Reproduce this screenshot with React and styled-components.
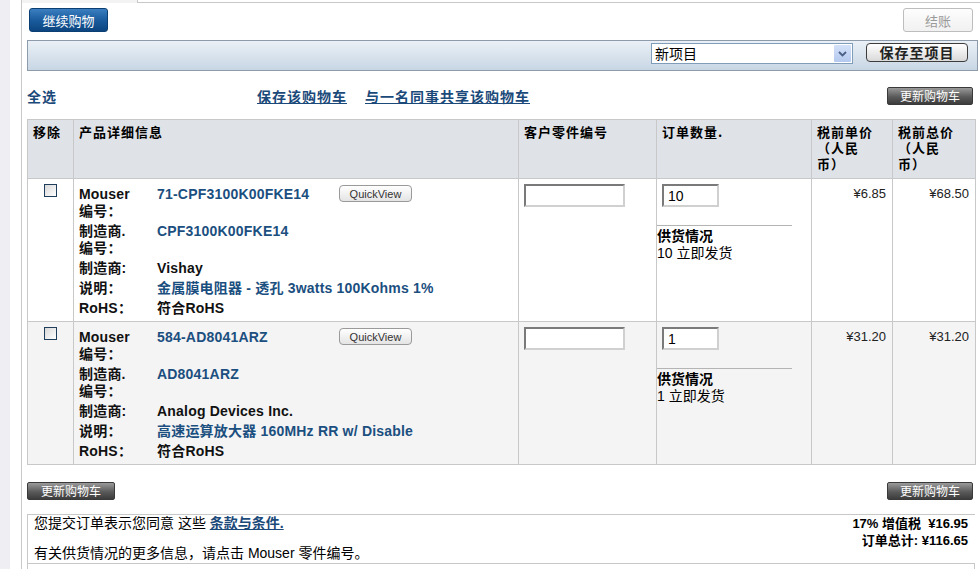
import React from 'react'
import styled, { createGlobalStyle } from 'styled-components'

const GlobalStyle = createGlobalStyle`
  body {
    margin: 0;
    background: #fff;
    color: #000;
    font-family: "Liberation Sans", "Noto Sans CJK SC", sans-serif;
    font-size: 13px;
  }
`

const items = [
    {
        mouser: '71-CPF3100K00FKE14',
        mfrPart: 'CPF3100K00FKE14',
        maker: 'Vishay',
        desc: '金属膜电阻器 - 透孔 3watts 100Kohms 1%',
        qty: '10',
        unit: '¥6.85',
        total: '¥68.50',
    },
    {
        mouser: '584-AD8041ARZ',
        mfrPart: 'AD8041ARZ',
        maker: 'Analog Devices Inc.',
        desc: '高速运算放大器 160MHz RR w/ Disable',
        qty: '1',
        unit: '¥31.20',
        total: '¥31.20',
    },
]

function App() {
    return (
        <Page>
            <GlobalStyle />
            <Side />
            <Gutter />
            <Main>
                <TopTabs>
                    <Tab />
                    <TabRest />
                </TopTabs>
                <Content>
                    <ActionRow>
                        <BlueButton>继续购物</BlueButton>
                        <CheckoutButton>结账</CheckoutButton>
                    </ActionRow>

                    <ProjectBar>
                        <ProjectSelect>
                            <span>新项目</span>
                            <SelectArrow>
                                <svg width="9" height="6" viewBox="0 0 9 6">
                                    <path d="M1 1 L4.5 4.5 L8 1" fill="none" stroke="#4a5f86" strokeWidth="1.8" />
                                </svg>
                            </SelectArrow>
                        </ProjectSelect>
                        <SaveButton>保存至项目</SaveButton>
                    </ProjectBar>

                    <LinksRow>
                        <SelectAll>全选</SelectAll>
                        <Links>
                            <CartLink>保存该购物车</CartLink>
                            <CartLink>与一名同事共享该购物车</CartLink>
                        </Links>
                        <GrayButton>更新购物车</GrayButton>
                    </LinksRow>

                    <Cart>
                        <colgroup>
                            <col style={{ width: 46 }} />
                            <col style={{ width: 445 }} />
                            <col style={{ width: 138 }} />
                            <col style={{ width: 155 }} />
                            <col style={{ width: 81 }} />
                            <col style={{ width: 83 }} />
                        </colgroup>
                        <thead>
                            <HeadRow>
                                <Th>移除</Th>
                                <Th>产品详细信息</Th>
                                <Th>客户零件编号</Th>
                                <Th>订单数量.</Th>
                                <Th>税前单价<br />（人民<br />币）</Th>
                                <Th>税前总价<br />（人民<br />币）</Th>
                            </HeadRow>
                        </thead>
                        <tbody>
                            {items.map((it, i) => (
                                <ItemRow key={it.mouser} $alt={i % 2 === 1}>
                                    <CheckCell>
                                        <Check type="checkbox" />
                                    </CheckCell>
                                    <DetailCell>
                                        <Details>
                                            <Label>Mouser<br />编号：</Label>
                                            <FirstValue>
                                                <PartLink>{it.mouser}</PartLink>
                                                <QuickView>QuickView</QuickView>
                                            </FirstValue>
                                            <Label>制造商.<br />编号：</Label>
                                            <Value $link>{it.mfrPart}</Value>
                                            <Label>制造商:</Label>
                                            <Value>{it.maker}</Value>
                                            <Label>说明：</Label>
                                            <Value $link>{it.desc}</Value>
                                            <Label>RoHS：</Label>
                                            <Value>符合RoHS</Value>
                                        </Details>
                                    </DetailCell>
                                    <Td>
                                        <TextBox $w={101} />
                                    </Td>
                                    <Td>
                                        <TextBox $w={57} defaultValue={it.qty} />
                                        <Availability>
                                            <strong>供货情况</strong>
                                            <div>{it.qty} 立即发货</div>
                                        </Availability>
                                    </Td>
                                    <Price>{it.unit}</Price>
                                    <Price>{it.total}</Price>
                                </ItemRow>
                            ))}
                        </tbody>
                    </Cart>

                    <BottomRow>
                        <GrayButton $w={88}>更新购物车</GrayButton>
                        <GrayButton>更新购物车</GrayButton>
                    </BottomRow>

                    <Footer>
                        <FooterText>
                            <div>您提交订单表示您同意 这些 <TermsLink>条款与条件.</TermsLink></div>
                            <div>有关供货情况的更多信息，请点击 Mouser 零件编号。</div>
                        </FooterText>
                        <Totals>
                            <div>17% 增值税&nbsp;&nbsp;¥16.95</div>
                            <div>订单总计: ¥116.65</div>
                        </Totals>
                    </Footer>
                    <FooterTail />
                </Content>
            </Main>
        </Page>
    )
}

const Page = styled.div`
   display: flex;
   width: 980px;
   height: 569px;
   overflow: hidden;
`
const Side = styled.div`
   width: 10px;
   background: #efeff3;
`
const Gutter = styled.div`
   width: 11px;
`
const Main = styled.div`
   flex: 1;
   border-left: 1px solid #c8c8c8;
`
const TopTabs = styled.div`
   display: flex;
   height: 3px;
`
const Tab = styled.div`
   width: 115px;
   background: #f3f3f3;
`
const TabRest = styled.div`
   flex: 1;
   border-left: 1px solid #c8c8c8;
   border-bottom: 1px solid #c8c8c8;
`
const Content = styled.div`
   padding: 5px 2px 0 5px;
`
const ActionRow = styled.div`
   display: flex;
   justify-content: space-between;
   padding: 0 5px 0 2px;
`
const BlueButton = styled.button`
   width: 79px;
   height: 24px;
   border: 1px solid #0b3f73;
   border-radius: 3px;
   background: linear-gradient(#3b7fc0, #1a5c9e 50%, #0c4580);
   color: #fff;
   font-family: "Noto Sans CJK SC", sans-serif;
   font-size: 13px;
   padding: 0;
`
const CheckoutButton = styled.button`
   width: 70px;
   height: 24px;
   border: 1px solid #bdbdbd;
   border-radius: 3px;
   background: linear-gradient(#fdfdfd, #f1f1f1);
   color: #9a9a9a;
   font-family: "Noto Sans CJK SC", sans-serif;
   font-size: 13px;
   padding: 0;
`
const ProjectBar = styled.div`
   margin-top: 8px;
   height: 31px;
   box-sizing: border-box;
   border: 1px solid #8d9bab;
   background: linear-gradient(#eaf0f6, #c8d6e4);
   display: flex;
   justify-content: flex-end;
   align-items: flex-start;
   gap: 13px;
   padding: 2px 9px 0 0;
`
const ProjectSelect = styled.div`
   width: 202px;
   height: 21px;
   box-sizing: border-box;
   border: 1px solid #7f9db9;
   background: #fff;
   display: flex;
   align-items: center;
   justify-content: space-between;
   font-family: "Noto Sans CJK SC", sans-serif;
   font-size: 14px;
   line-height: 17px;
   padding-left: 3px;
`
const SelectArrow = styled.span`
   width: 17px;
   height: 17px;
   margin-right: 1px;
   border-radius: 1px;
   background: linear-gradient(#d4e1f8, #b4c9ef);
   display: flex;
   align-items: center;
   justify-content: center;
`
const SaveButton = styled.button`
   width: 102px;
   height: 19px;
   border: 1px solid #3c3c3c;
   border-radius: 4px;
   background: linear-gradient(#ffffff, #d9d9d9);
   color: #222;
   font-family: "Noto Sans CJK SC", sans-serif;
   font-weight: bold;
   font-size: 14px;
   letter-spacing: 1px;
   line-height: 15px;
   padding: 0;
`
const LinksRow = styled.div`
   margin: 14px 0 12px;
   height: 22px;
   display: flex;
   align-items: center;
   padding-right: 5px;
`
const SelectAll = styled.a`
   width: 230px;
   color: #1b4a7a;
   font-family: "Noto Sans CJK SC", sans-serif;
   font-weight: bold;
   font-size: 14px;
   letter-spacing: 1px;
`
const Links = styled.div`
   display: flex;
   gap: 18px;
`
const CartLink = styled.a`
   color: #1b4a7a;
   text-decoration: underline;
   font-family: "Noto Sans CJK SC", sans-serif;
   font-weight: bold;
   font-size: 14px;
   letter-spacing: 1px;
`
const GrayButton = styled.button`
   margin-left: auto;
   width: ${p => p.$w || 86}px;
   height: 18px;
   border: 1px solid #3a3a3a;
   border-radius: 2px;
   background: linear-gradient(#9a9a9a, #5a5a5a 55%, #3c3c3c);
   color: #fff;
   font-family: "Noto Sans CJK SC", sans-serif;
   font-size: 12px;
   line-height: 14px;
   padding: 0;
`
const Cart = styled.table`
   width: 948px;
   table-layout: fixed;
   border-collapse: collapse;
   border: 1px solid #c8c8c8;
`
const HeadRow = styled.tr`
   height: 59px;
   background: #dfe2e7;
`
const Th = styled.th`
   border: 1px solid #c8c8c8;
   text-align: left;
   vertical-align: top;
   padding: 4px 5px;
   font-family: "Noto Sans CJK SC", sans-serif;
   font-size: 13px;
   font-weight: bold;
   letter-spacing: 1px;
   line-height: 16px;
`
const ItemRow = styled.tr`
   background: ${p => (p.$alt ? '#f4f4f4' : '#fff')};
`
const Td = styled.td`
   border: 1px solid #c8c8c8;
   vertical-align: top;
   padding: 5px;
`
const CheckCell = styled(Td)`
   text-align: center;
`
const Check = styled.input`
   appearance: none;
   width: 13px;
   height: 13px;
   margin: 0;
   border: 1px solid #1f3e5c;
   background: linear-gradient(135deg, #d8d8d8, #ffffff);
   display: inline-block;
   vertical-align: top;
`
const DetailCell = styled(Td)`
   padding: 7px 5px 4px 5px;
`
const Details = styled.div`
   display: grid;
   grid-template-columns: 78px 1fr;
   row-gap: 3px;
   font-size: 14px;
   line-height: 17px;
   font-weight: bold;
   letter-spacing: 0.2px;
`
const Label = styled.div`
   color: #111;
`
const Value = styled.div`
   color: ${p => (p.$link ? '#1b4f80' : '#111')};
`
const FirstValue = styled.div`
   display: flex;
   align-items: flex-start;
`
const PartLink = styled.span`
   width: 182px;
   color: #1b4f80;
`
const QuickView = styled.button`
   width: 73px;
   height: 17px;
   margin-top: -1px;
   border: 1px solid #9a9a9a;
   border-radius: 4px;
   background: linear-gradient(#ffffff, #e4e4e4);
   color: #333;
   font-family: "Liberation Sans", sans-serif;
   font-size: 11px;
   font-weight: normal;
   letter-spacing: 0;
   padding: 0;
`
const TextBox = styled.input`
   width: ${p => p.$w}px;
   height: 23px;
   box-sizing: border-box;
   margin: 0;
   border: 2px solid;
   border-color: #7a7a7a #d0d0d0 #d0d0d0 #7a7a7a;
   background: #fff;
   padding: 0 4px;
   font-family: "Liberation Sans", sans-serif;
   font-size: 14px;
   display: block;
`
const Availability = styled.div`
   margin: 18px 0 0 -5px;
   width: 135px;
   border-top: 1px solid #b4b4b4;
   padding-top: 2px;
   font-family: "Liberation Sans", "Noto Sans CJK SC", sans-serif;
   font-size: 14px;
   line-height: 17px;
   strong {
       display: block;
   }
`
const Price = styled(Td)`
   text-align: right;
   padding: 7px 6px 5px 5px;
   font-size: 13px;
   line-height: 16px;
   color: #222;
`
const BottomRow = styled.div`
   margin-top: 17px;
   display: flex;
   justify-content: space-between;
   padding-right: 5px;
   button:first-child {
       margin-left: 0;
   }
`
const Footer = styled.div`
   margin-top: 14px;
   width: 948px;
   height: 50px;
   box-sizing: border-box;
   border: 1px solid #c8c8c8;
   border-right: none;
   display: flex;
   justify-content: space-between;
   padding: 0 7px 0 6px;
   font-family: "Liberation Sans", "Noto Sans CJK SC", sans-serif;
   font-size: 14px;
   line-height: 17px;
`
const FooterText = styled.div`
   display: flex;
   flex-direction: column;
   justify-content: space-between;
   padding-bottom: 1px;
`
const TermsLink = styled.a`
   color: #1b4a7a;
   font-weight: bold;
   text-decoration: underline;
`
const Totals = styled.div`
   text-align: right;
   font-weight: bold;
   font-size: 13px;
`
const FooterTail = styled.div`
   width: 948px;
   height: 10px;
   box-sizing: border-box;
   border-left: 1px solid #c8c8c8;
   border-right: 1px solid #c8c8c8;
`

export default App
